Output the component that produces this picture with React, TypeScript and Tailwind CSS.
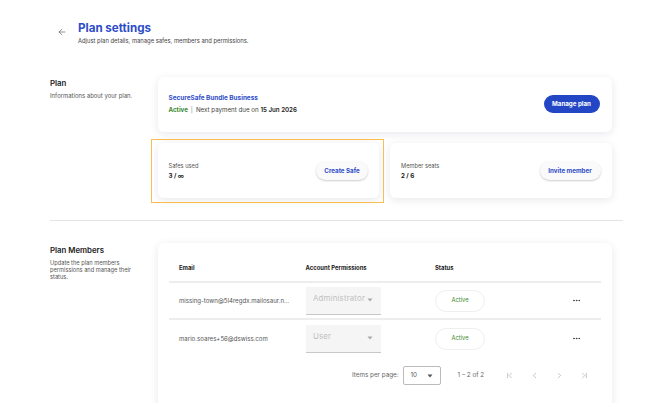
import {
    ArrowLeft,
    ChevronFirst,
    ChevronLast,
    ChevronLeft,
    ChevronRight,
    Ellipsis
} from "lucide-react";

const Caret = ({ className = "" }: { className?: string }) => (
    <svg
    width="6"
    height="4"
    viewBox="0 0 6 4"
    className={className}>
        <path d="M0.5 0.5 L5.5 0.5 L3 3.5 Z" fill="currentColor" />
    </svg>
);

const members = [
    {
        email: "missing-town@5l4regdx.mailosaur.n...",
        role: "Administrator"
    },
    {
        email: "mario.soares+56@dswiss.com",
        role: "User"
    }
];

const App = () => {
    return (
        <div className="w-[670px] h-[403px] overflow-hidden bg-white text-[#333] font-['Inter',sans-serif]">
            {/* page header */}
            <div className="flex items-start pt-[21px] pl-[57px]">
                <ArrowLeft size={10} strokeWidth={1.5} className="mt-[6px] text-[#555]" />
                <div className="ml-[11px]">
                    <h1 className="text-[11.6px] leading-[15px] font-bold text-[#2d4cc8]">
                        Plan settings
                    </h1>
                    <p className="mt-[1px] text-[5.85px] leading-[8px] text-[#444]">
                        Adjust plan details, manage safes, members and permissions.
                    </p>
                </div>
            </div>

            <div className="w-[573px] ml-[50px]">
                {/* plan */}
                <div className="flex mt-[32px]">
                    <div className="w-[107.5px] pt-[1px]">
                        <h2 className="text-[7.8px] leading-[10px] font-semibold text-[#222]">Plan</h2>
                        <p className="mt-[4px] text-[5.95px] leading-[7px] text-[#555]">
                            Informations about your plan.
                        </p>
                    </div>
                    <div className="w-[454px] flex flex-col gap-[11px]">
                        <div className="h-[55px] px-[11px] flex items-center justify-between bg-white rounded-[6px] shadow-[0_2px_9px_rgba(20,30,60,0.1)]">
                            <div className="flex flex-col gap-[4px] -mt-[1px]">
                                <span className="text-[6.4px] leading-[8px] font-bold text-[#2d4cc8]">
                                    SecureSafe Bundle Business
                                </span>
                                <span className="text-[6.2px] leading-[8px] text-[#444]">
                                    <span className="font-bold text-[#3c8a2e]">Active</span>
                                    <span className="mx-[3px] text-[#888]">|</span>
                                    Next payment due on <span className="font-semibold text-[#222]">15 Jun 2026</span>
                                </span>
                            </div>
                            <button className="h-[18px] w-[56px] -mt-[1px] mr-[1px] rounded-full bg-[#2347c4] text-white text-[6.2px] font-bold">
                                Manage plan
                            </button>
                        </div>
                        <div className="grid grid-cols-2 gap-[11px]">
                            <div className="relative">
                                <div className="h-[55px] px-[11px] flex items-center justify-between bg-white rounded-[6px] shadow-[0_2px_9px_rgba(20,30,60,0.1)]">
                                    <div className="flex flex-col gap-[3px]">
                                        <span className="text-[5.7px] leading-[7px] text-[#555]">Safes used</span>
                                        <span className="text-[6.2px] leading-[8px] font-bold text-[#222]">3 / ∞</span>
                                    </div>
                                    <button className="h-[19px] w-[52px] rounded-full bg-[#fafafb] shadow-[0_1px_2px_rgba(0,0,0,0.2)] text-[6.2px] font-bold text-[#2d4cc8]">
                                        Create Safe
                                    </button>
                                </div>
                                <div className="absolute -left-[6.5px] -right-[5px] -top-[4px] -bottom-[5px] border-[1.5px] border-[#fbbd4f] pointer-events-none" />
                            </div>
                            <div className="h-[55px] px-[11px] flex items-center justify-between bg-white rounded-[6px] shadow-[0_2px_9px_rgba(20,30,60,0.1)]">
                                <div className="flex flex-col gap-[3px]">
                                    <span className="text-[5.7px] leading-[7px] text-[#555]">Member seats</span>
                                    <span className="text-[6.2px] leading-[8px] font-bold text-[#222]">2 / 6</span>
                                </div>
                                <button className="h-[19px] w-[61px] rounded-full bg-[#fafafb] shadow-[0_1px_2px_rgba(0,0,0,0.2)] text-[6.2px] font-bold text-[#2d4cc8]">
                                    Invite member
                                </button>
                            </div>
                        </div>
                    </div>
                </div>

                <div className="mt-[22px] h-[1px] bg-[#e4e4e4]" />

                {/* plan members */}
                <div className="flex mt-[22px]">
                    <div className="w-[107.5px] pt-[1px]">
                        <h2 className="mt-[1px] text-[7.8px] leading-[10px] font-semibold text-[#222]">Plan Members</h2>
                        <p className="mt-[4px] w-[90px] text-[5.7px] leading-[7px] text-[#555]">
                            Update the plan members permissions and manage their status.
                        </p>
                    </div>
                    <div className="w-[454px] h-[200px] px-[11px] pt-[12px] bg-white rounded-[6px] shadow-[0_2px_9px_rgba(20,30,60,0.1)]">
                        <div className="grid grid-cols-[137px_129.5px_1fr_50px] h-[28px] items-center border-b-2 border-[#ededed] text-[5.9px] font-bold text-[#222]">
                            <span className="pl-[10.5px]">Email</span>
                            <span>Account Permissions</span>
                            <span>Status</span>
                            <span />
                        </div>
                        {
                            members.map((member, memberIndex) => (
                                <div
                                key={memberIndex}
                                className={`grid grid-cols-[137px_129.5px_1fr_50px] h-[37px] items-center ${memberIndex === 0 ? "border-b-2 border-[#ededed]" : ""}`}>
                                    <span className="pl-[10.5px] text-[6.1px] text-[#555] whitespace-nowrap">{member.email}</span>
                                    <div className="w-[75.5px] h-[28px] pl-[7.5px] pr-[8px] flex items-center justify-between bg-[#f5f5f5] border-b border-[#c8c8c8]">
                                        <span className="text-[7.8px] tracking-[0.2px] text-[#c0c0c0] -mt-[2px]">{member.role}</span>
                                        <Caret className="text-[#aaa]" />
                                    </div>
                                    <div className="w-[50px] h-[22px] flex items-center justify-center rounded-full border border-[#efefef] text-[5.8px] text-[#3c8a2e]">
                                        Active
                                    </div>
                                    <div className="flex justify-center pl-[2px]">
                                        <Ellipsis size={9} strokeWidth={2.2} className="text-[#333]" />
                                    </div>
                                </div>
                            ))
                        }
                        <div className="h-[37px] flex items-center text-[6.3px] text-[#666]">
                            <span className="ml-[183.5px]">Items per page:</span>
                            <div className="ml-[4px] w-[38.5px] h-[19px] px-[7px] flex items-center justify-between rounded-[2px] border border-[#bbb]">
                                <span className="text-[#555]">10</span>
                                <Caret className="text-[#555]" />
                            </div>
                            <span className="ml-[16.5px]">1 – 2 of 2</span>
                            <div className="ml-[21px] flex items-center gap-[16px] text-[#999]">
                                <ChevronFirst size={9} strokeWidth={1.5} />
                                <ChevronLeft size={9} strokeWidth={1.5} />
                                <ChevronRight size={9} strokeWidth={1.5} />
                                <ChevronLast size={9} strokeWidth={1.5} />
                            </div>
                        </div>
                    </div>
                </div>
            </div>
        </div>
    );
};

export default App;
